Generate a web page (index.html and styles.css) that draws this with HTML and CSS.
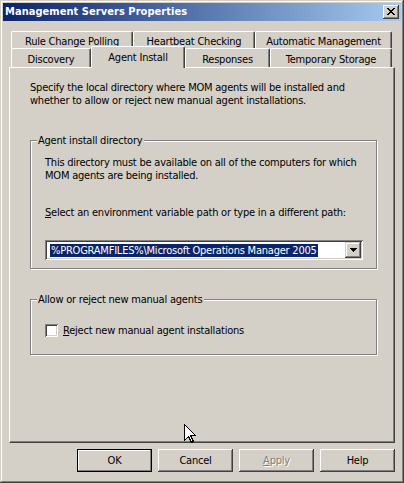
FILE: index.html
```html
<!DOCTYPE html>
<html>
<head>
<meta charset="utf-8">
<link rel="stylesheet" href="styles.css">
</head>
<body>
<div class="window">
  <div class="titlebar">
    <span class="title">Management Servers Properties</span>
    <div class="close">
      <svg width="8" height="7" viewBox="0 0 8 7" shape-rendering="crispEdges">
        <path d="M0 0h2v1h-2zM6 0h2v1h-2zM1 1h2v1h-2zM5 1h2v1h-2zM2 2h4v1h-4zM3 3h2v1h-2zM2 4h4v1h-4zM1 5h2v1h-2zM5 5h2v1h-2zM0 6h2v1h-2zM6 6h2v1h-2z" fill="#000"/>
      </svg>
    </div>
  </div>
  <div class="client">
    <div class="tabs">
      <div class="tabrow back">
        <div class="tab t-rule">Rule Change Polling</div>
        <div class="tab t-heart">Heartbeat Checking</div>
        <div class="tab t-auto">Automatic Management</div>
      </div>
      <div class="tabrow front">
        <div class="tab t-disc">Discovery</div>
        <div class="tab t-agent selected">Agent Install</div>
        <div class="tab t-resp">Responses</div>
        <div class="tab t-temp">Temporary Storage</div>
      </div>
    </div>
    <div class="panel">
      <p class="intro">Specify the local directory where MOM agents will be installed and whether to allow or reject new manual agent installations.</p>
      <fieldset class="group group-dir">
        <legend>Agent install directory</legend>
        <p class="note">This directory must be available on all of the computers for which MOM agents are being installed.</p>
        <p class="prompt"><u>S</u>elect an environment variable path or type in a different path:</p>
        <div class="combo">
          <div class="combo-text"><span class="sel">%PROGRAMFILES%\Microsoft Operations Manager 2005</span></div>
          <div class="combo-btn">
            <svg width="7" height="4" viewBox="0 0 7 4" shape-rendering="crispEdges"><path d="M0 0h7v1h-7zM1 1h5v1h-5zM2 2h3v1h-3zM3 3h1v1h-1z" fill="#000"/></svg>
          </div>
        </div>
      </fieldset>
      <fieldset class="group group-manual">
        <legend>Allow or reject new manual agents</legend>
        <div class="check-row">
          <span class="checkbox"></span>
          <span class="check-label"><u>R</u>eject new manual agent installations</span>
        </div>
      </fieldset>
    </div>
    <div class="buttons">
      <div class="btn default">OK</div>
      <div class="btn">Cancel</div>
      <div class="btn disabled"><u>A</u>pply</div>
      <div class="btn">Help</div>
    </div>
  </div>
  <svg class="cursor" width="13" height="21" viewBox="0 0 13 21" shape-rendering="crispEdges">
    <path d="M0.5 0.5 L0.5 16.5 L4.5 12.5 L7.5 18.5 L9.5 17.5 L6.5 11.5 L11.5 11.5 Z" fill="#fff" stroke="#000" stroke-width="1"/>
  </svg>
</div>
</body>
</html>
```

FILE: styles.css
```css
* { box-sizing: border-box; }

html, body {
  margin: 0;
  padding: 0;
  background: #d4d0c8;
}

body {
  font-family: "DejaVu Sans Condensed", "DejaVu Sans", sans-serif;
  font-stretch: condensed;
  font-size: 11px;
  line-height: 13px;
  letter-spacing: -0.22px;
  color: #000;
}

.window {
  position: relative;
  width: 404px;
  height: 483px;
  padding: 3px;
  background: #d4d0c8;
  box-shadow: inset -1px -1px 0 #404040, inset 1px 1px 0 #d4d0c8,
              inset -2px -2px 0 #808080, inset 2px 2px 0 #fff;
  display: flex;
  flex-direction: column;
}

/* title bar */
.titlebar {
  height: 18px;
  display: flex;
  align-items: center;
  justify-content: space-between;
  padding: 0 2px 0 2px;
  background: linear-gradient(to right, #0a246a, #a6caf0);
  color: #fff;
}

.title {
  font-weight: bold;
  font-size: 11px;
  line-height: 18px;
  letter-spacing: 0.05px;
}

.close {
  width: 16px;
  height: 14px;
  background: #d4d0c8;
  box-shadow: inset -1px -1px 0 #404040, inset 1px 1px 0 #fff,
              inset -2px -2px 0 #808080, inset 2px 2px 0 #d4d0c8;
  display: flex;
  align-items: center;
  justify-content: center;
  padding: 0 0 1px 0;
}

.close svg { display: block; }

/* client area */
.client {
  flex: 1;
  padding: 10px 0 0 6px;
  display: flex;
  flex-direction: column;
}

.tabs {
  padding-left: 2px;
  width: 386px;
}

.tabrow {
  display: flex;
  width: 381px;
}

.tabrow.back {
  height: 17px;
  align-items: flex-start;
}

.tabrow.front {
  height: 19px;
  align-items: flex-end;
}

.tab {
  background: #d4d0c8;
  border-left: 1px solid #fff;
  border-top: 1px solid #fff;
  border-right: 1px solid #404040;
  border-radius: 2px 2px 0 0;
  box-shadow: inset -1px 0 0 #808080;
  text-align: center;
  white-space: nowrap;
  padding-top: 3px;
}

.back .tab { height: 17px; padding-top: 3px; }
.front .tab { height: 19px; padding-top: 4px; }

.tab.selected {
  position: relative;
  z-index: 2;
  height: 22px;
  margin-bottom: -1px;
  padding-top: 4px;
}

.t-rule { width: 122px; }
.t-heart { width: 122px; }
.t-auto { width: 137px; }
.t-disc { width: 80px; }
.t-agent { width: 94px; }
.t-resp { width: 85px; }
.t-temp { width: 122px; }

/* property page */
.panel {
  width: 386px;
  height: 376px;
  border-top: 1px solid #fff;
  border-left: 1px solid #fff;
  border-right: 1px solid #404040;
  border-bottom: 1px solid #404040;
  box-shadow: inset -1px -1px 0 #808080;
  padding: 13px 0 0 20px;
}

.intro {
  margin: 0;
  width: 350px;
}

.group {
  margin: 27px 0 0 0;
  width: 347px;
  padding: 0 0 0 14px;
  border: 1px solid #808080;
  box-shadow: inset 1px 1px 0 #fff, 1px 1px 0 #fff;
  min-width: 0;
}

.group legend {
  margin-left: -8px;
  padding: 0 2px 0 1px;
  background: #d4d0c8;
  line-height: 13px;
}

.group-dir { padding-bottom: 8px; }

.note {
  margin: 9px 0 0 0;
  width: 325px;
}

.prompt {
  margin: 24px 0 0 0;
}

.combo {
  margin-top: 21px;
  width: 318px;
  height: 20px;
  background: #fff;
  box-shadow: inset 1px 1px 0 #808080, inset -1px -1px 0 #fff,
              inset 2px 2px 0 #404040, inset -2px -2px 0 #d4d0c8;
  padding: 2px;
  display: flex;
  align-items: center;
  justify-content: space-between;
}

.combo-text {
  padding-left: 3px;
  white-space: nowrap;
  overflow: hidden;
}

.sel {
  background: #0a246a;
  color: #fff;
  padding: 1px 1px 1px 1px;
}

.combo-btn {
  width: 16px;
  height: 16px;
  background: #d4d0c8;
  box-shadow: inset -1px -1px 0 #404040, inset 1px 1px 0 #d4d0c8,
              inset -2px -2px 0 #808080, inset 2px 2px 0 #fff;
  display: flex;
  align-items: center;
  justify-content: center;
  flex-shrink: 0;
}

.combo-btn svg { display: block; }

.group-manual {
  margin-top: 24px;
  padding-top: 18px;
  padding-bottom: 17px;
}

.check-row {
  display: flex;
  align-items: center;
  gap: 5px;
}

.checkbox {
  width: 13px;
  height: 13px;
  background: #fff;
  box-shadow: inset 1px 1px 0 #808080, inset -1px -1px 0 #fff,
              inset 2px 2px 0 #404040, inset -2px -2px 0 #d4d0c8;
  flex-shrink: 0;
}

/* buttons */
.buttons {
  width: 386px;
  margin-top: 6px;
  display: flex;
  justify-content: flex-end;
  gap: 6px;
}

.btn {
  width: 75px;
  height: 23px;
  background: #d4d0c8;
  box-shadow: inset -1px -1px 0 #404040, inset 1px 1px 0 #fff,
              inset -2px -2px 0 #808080, inset 2px 2px 0 #d4d0c8;
  display: flex;
  align-items: center;
  justify-content: center;
}

.btn.default {
  box-shadow: inset 0 0 0 1px #000, inset -2px -2px 0 #808080, inset 2px 2px 0 #fff;
}

.btn.disabled {
  color: #808080;
  text-shadow: 1px 1px 0 #fff;
}

.cursor {
  position: absolute;
  left: 184px;
  top: 424px;
}
```
